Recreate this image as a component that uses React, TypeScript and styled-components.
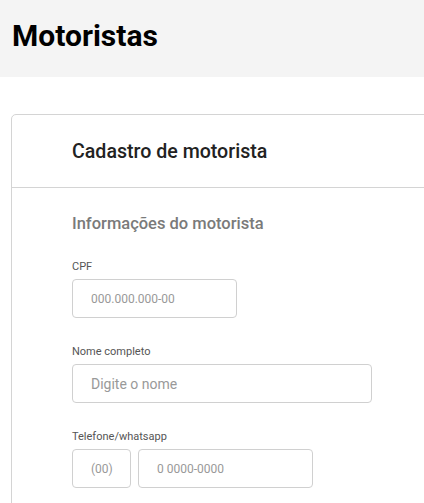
import React from "react";
import styled, { createGlobalStyle } from "styled-components";

const GlobalStyle = createGlobalStyle`
  html, body {
    margin: 0;
    padding: 0;
    background: #ffffff;
    font-family: Roboto, "Liberation Sans", Arial, sans-serif;
  }
  * { box-sizing: border-box; }
`;

const Page = styled.div`
  width: 100%;
  height: 503px;
  overflow: hidden;
`;

const Header = styled.header`
  height: 77px;
  background: #f4f4f4;
  display: flex;
  align-items: center;
  padding-left: 12px;
`;

const Title = styled.h1`
  margin: 0;
  font-size: 30px;
  font-weight: 700;
  color: #000;
  line-height: 1;
  padding-bottom: 6px;
`;

const Content = styled.main`
  padding: 37px 0 0 11px;
`;

const Card = styled.section`
  width: 480px;
  border: 1px solid #d4d4d4;
  border-radius: 5px;
  background: #fff;
  min-height: 420px;
`;

const CardHeader = styled.div`
  height: 73px;
  display: flex;
  align-items: center;
  padding-left: 60px;
  border-bottom: 1px solid #d4d4d4;
`;

const CardTitle = styled.h2`
  margin: 0;
  font-size: 19.6px;
  font-weight: 500;
  color: #222;
`;

const CardBody = styled.div`
  padding: 25px 0 0 60px;
  display: flex;
  flex-direction: column;
`;

const SectionTitle = styled.h3`
  margin: 0 0 26px;
  font-size: 16.5px;
  font-weight: 500;
  color: #7a7a7a;
  line-height: 21px;
`;

const Field = styled.div`
  display: flex;
  flex-direction: column;
  gap: 5px;
  margin-bottom: 27px;
`;

const Label = styled.label`
  font-size: 11px;
  line-height: 14px;
  color: #555;
`;

const InputRow = styled.div`
  display: flex;
  gap: 7px;
`;

const Input = styled.input<{ $w: number; $numeric?: boolean }>`
  width: ${(p) => p.$w}px;
  height: 39px;
  border: 1px solid #d0d0d0;
  border-radius: 4px;
  padding: 0 0 0 18px;
  font-family: Roboto, "Liberation Sans", Arial, sans-serif;
  font-size: ${(p) => (p.$numeric ? "12px" : "14px")};
  color: #333;
  outline: none;
  background: #fff;
  &::placeholder {
    color: #999;
  }
`;

export default function App() {
  return (
    <Page>
      <GlobalStyle />
      <Header>
        <Title>Motoristas</Title>
      </Header>
      <Content>
        <Card>
          <CardHeader>
            <CardTitle>Cadastro de motorista</CardTitle>
          </CardHeader>
          <CardBody>
            <SectionTitle>Informações do motorista</SectionTitle>
            <Field>
              <Label>CPF</Label>
              <Input $w={165} $numeric placeholder="000.000.000-00" />
            </Field>
            <Field>
              <Label>Nome completo</Label>
              <Input $w={300} placeholder="Digite o nome" />
            </Field>
            <Field>
              <Label>Telefone/whatsapp</Label>
              <InputRow>
                <Input $w={59} $numeric placeholder="(00)" />
                <Input $w={175} $numeric placeholder="0 0000-0000" />
              </InputRow>
            </Field>
          </CardBody>
        </Card>
      </Content>
    </Page>
  );
}
